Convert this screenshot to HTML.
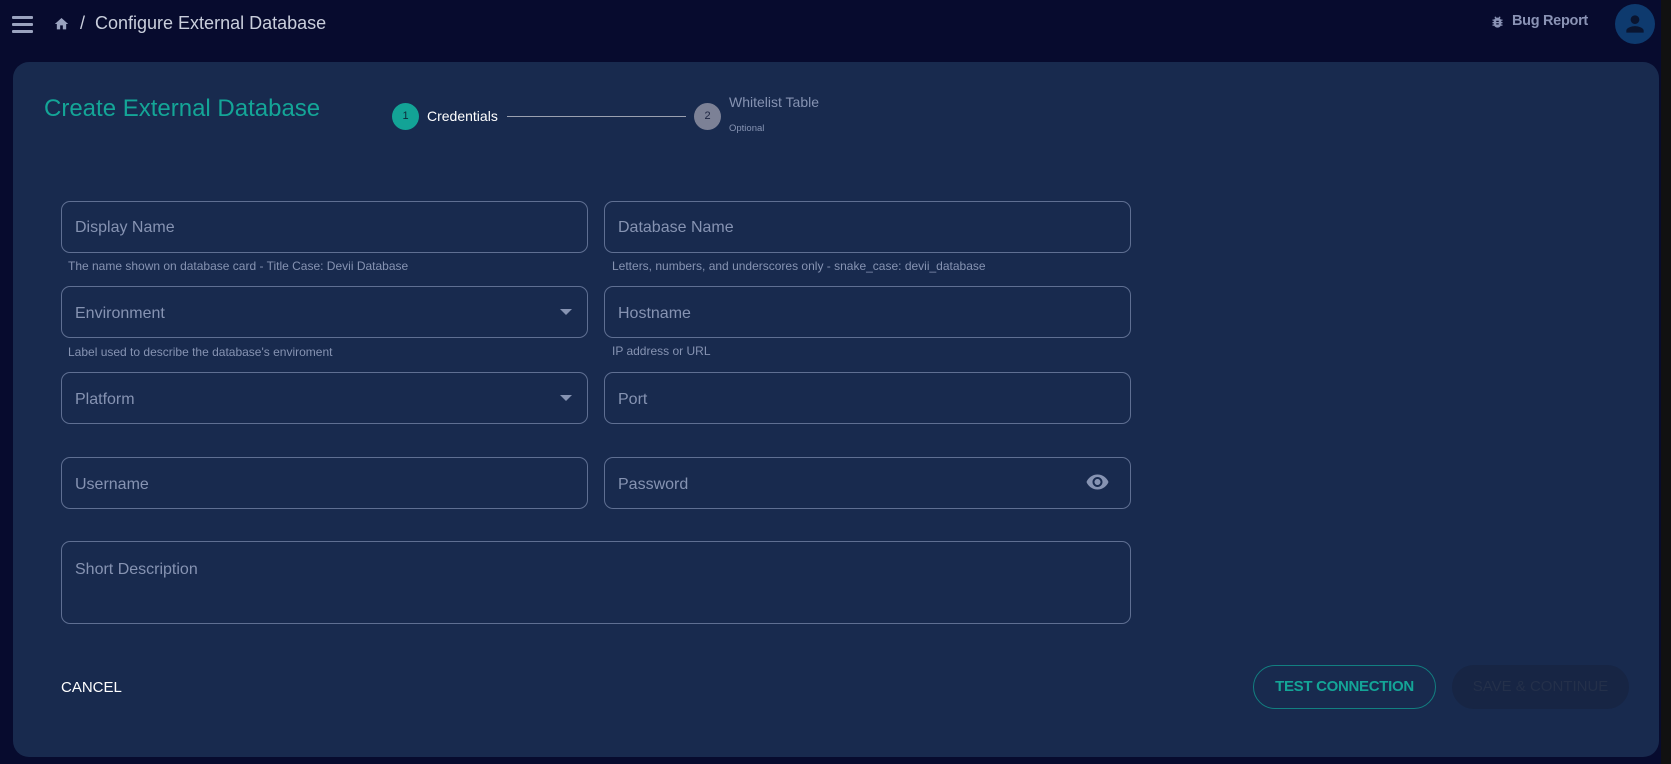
<!DOCTYPE html>
<html><head><style>
*{margin:0;padding:0;box-sizing:border-box}
body{width:1671px;height:764px;background:#070b2e;font-family:"Liberation Sans",sans-serif;position:relative;overflow:hidden}
.a{position:absolute}
.card{left:13px;top:62px;width:1646px;height:695px;background:#182a4e;border-radius:16px}
.f{position:absolute;border:1px solid #5f6f92;border-radius:9px}
.lab{position:absolute;color:#8693b2;font-size:16px}
.h{position:absolute;color:#8693b2;font-size:12px}
.dd{position:absolute;width:0;height:0;border-left:6px solid transparent;border-right:6px solid transparent;border-top:6px solid #8693b2}
</style></head><body>
<div class="a" style="left:1661px;top:0;width:10px;height:764px;background:#111"></div>
<div class="a" style="left:12px;top:16px;width:21px;height:3px;background:#9aa3bf;border-radius:1px"></div>
<div class="a" style="left:12px;top:23px;width:21px;height:3px;background:#9aa3bf;border-radius:1px"></div>
<div class="a" style="left:12px;top:30px;width:21px;height:3px;background:#9aa3bf;border-radius:1px"></div>
<svg class="a" style="left:53px;top:16px" width="17" height="16" viewBox="0 0 24 24"><path d="M10 20v-6h4v6h5v-8h3L12 3 2 12h3v8z" fill="#9aa3bf"/></svg>
<div class="a" style="left:80px;top:13px;color:#c9cedc;font-size:18px">/&nbsp; Configure External Database</div>
<svg class="a" style="left:1490px;top:14px" width="15" height="16" viewBox="0 0 24 24"><path d="M20 8h-2.8c-.45-.78-1.07-1.450-1.82-1.96L17 4.41 15.59 3l-2.17 2.170C12.96 5.06 12.49 5 12 5s-.96.06-1.41.17L8.41 3 7 4.41l1.62 1.63C7.88 6.55 7.26 7.22 6.81 8H4v2h2.09c-.05.33-.09.66-.09 1v1H4v2h2v1c0 .34.04.67.09 1H4v2h2.81c1.04 1.79 2.97 3 5.19 3s4.15-1.21 5.19-3H20v-2h-2.09c.05-.33.09-.66.09-1v-1h2v-2h-2v-1c0-.34-.04-.67-.09-1H20V8zm-6 8h-4v-2h4v2zm0-4h-4v-2h4v2z" fill="#8a93b5"/></svg>
<div class="a" style="left:1512px;top:13px;color:#8a93b5;font-size:14.5px;font-weight:bold;letter-spacing:-0.3px">Bug Report</div>
<div class="a" style="left:1615px;top:4px;width:40px;height:40px;border-radius:50%;background:#0e3a6e"></div>
<svg class="a" style="left:1622px;top:11px" width="26" height="26" viewBox="0 0 24 24"><path d="M12 12c2.21 0 4-1.79 4-4s-1.79-4-4-4-4 1.79-4 4 1.79 4 4 4zm0 2c-2.67 0-8 1.34-8 4v2h16v-2c0-2.66-5.33-4-8-4z" fill="#0a1530"/></svg>

<div class="a card"></div>
<div class="a" style="left:44px;top:95px;color:#14a597;font-size:24px">Create External Database</div>
<div class="a" style="left:392px;top:103px;width:27px;height:27px;border-radius:50%;background:#13a396;color:#0d2a3a;font-size:11px;text-align:center;line-height:27px">1</div>
<div class="a" style="left:427px;top:108px;color:#fff;font-size:14px">Credentials</div>
<div class="a" style="left:507px;top:116px;width:179px;height:1px;background:#9aa0b0"></div>
<div class="a" style="left:694px;top:103px;width:27px;height:27px;border-radius:50%;background:#7c8196;color:#1c2440;font-size:11px;text-align:center;line-height:27px">2</div>
<div class="a" style="left:729px;top:94px;color:#8693b2;font-size:14px">Whitelist Table</div>
<div class="a" style="left:729px;top:123px;color:#8693b2;font-size:9.5px">Optional</div>

<div class="f" style="left:61px;top:201px;width:527px;height:52px"></div>
<div class="lab" style="left:75px;top:219px">Display Name</div>
<div class="h" style="left:68px;top:259px">The name shown on database card - Title Case: Devii Database</div>
<div class="f" style="left:604px;top:201px;width:527px;height:52px"></div>
<div class="lab" style="left:618px;top:219px">Database Name</div>
<div class="h" style="left:612px;top:259px">Letters, numbers, and underscores only - snake_case: devii_database</div>

<div class="f" style="left:61px;top:286px;width:527px;height:52px"></div>
<div class="lab" style="left:75px;top:305px">Environment</div>
<div class="dd" style="left:560px;top:309px"></div>
<div class="h" style="left:68px;top:345px">Label used to describe the database's enviroment</div>
<div class="f" style="left:604px;top:286px;width:527px;height:52px"></div>
<div class="lab" style="left:618px;top:305px">Hostname</div>
<div class="h" style="left:612px;top:344px">IP address or URL</div>

<div class="f" style="left:61px;top:372px;width:527px;height:52px"></div>
<div class="lab" style="left:75px;top:391px">Platform</div>
<div class="dd" style="left:560px;top:395px"></div>
<div class="f" style="left:604px;top:372px;width:527px;height:52px"></div>
<div class="lab" style="left:618px;top:391px">Port</div>

<div class="f" style="left:61px;top:457px;width:527px;height:52px"></div>
<div class="lab" style="left:75px;top:476px">Username</div>
<div class="f" style="left:604px;top:457px;width:527px;height:52px"></div>
<div class="lab" style="left:618px;top:476px">Password</div>
<svg class="a" style="left:1084px;top:470px" width="27" height="24" viewBox="0 0 24 24"><path d="M12 4.5C7 4.5 2.73 7.61 1 12c1.730 4.39 6 7.5 11 7.5s9.27-3.11 11-7.5c-1.73-4.39-6-7.5-11-7.5zM12 17c-2.76 0-5-2.24-5-5s2.24-5 5-5 5 2.24 5 5-2.24 5-5 5zm0-8c-1.66 0-3 1.34-3 3s1.34 3 3 3 3-1.34 3-3-1.34-3-3-3z" fill="#8693b2"/></svg>

<div class="f" style="left:61px;top:541px;width:1070px;height:83px"></div>
<div class="lab" style="left:75px;top:561px">Short Description</div>

<div class="a" style="left:61px;top:679px;color:#fff;font-size:15px">CANCEL</div>
<div class="a" style="left:1253px;top:665px;width:183px;height:44px;border:1px solid #127f80;border-radius:22px;color:#14a597;font-size:15px;font-weight:bold;text-align:center;line-height:42px;letter-spacing:-0.3px">TEST CONNECTION</div>
<div class="a" style="left:1452px;top:665px;width:177px;height:44px;border-radius:22px;background:#172544;color:#24304a;font-size:15px;text-align:center;line-height:44px">SAVE &amp; CONTINUE</div>
</body></html>
